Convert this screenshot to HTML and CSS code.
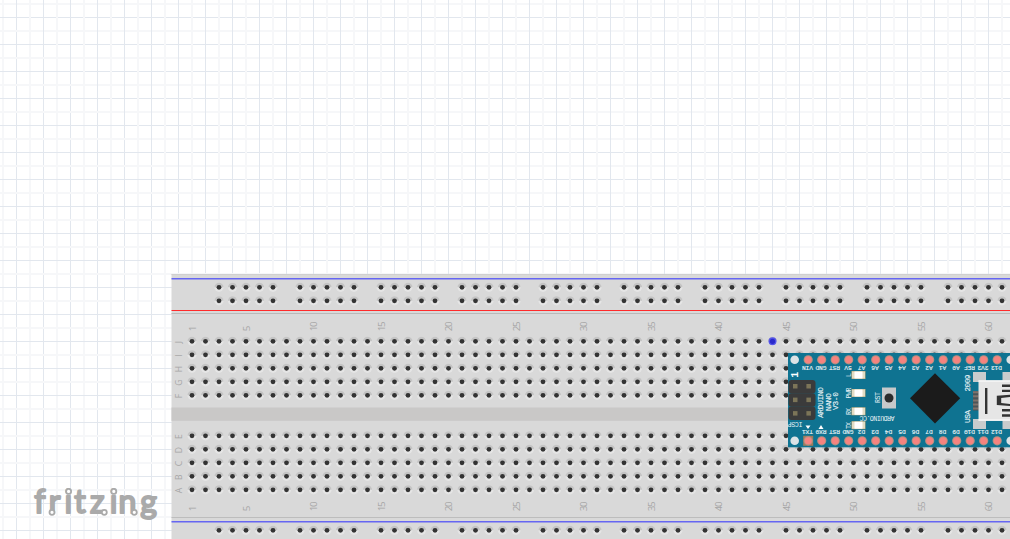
FILE: index.html
```html
<!DOCTYPE html>
<html lang="en">
<head>
<meta charset="utf-8">
<title>Fritzing</title>
<link rel="stylesheet" href="styles.css">
</head>
<body>
<svg class="canvas" width="1010" height="539" viewBox="0 0 1010 539">
  <defs>
    <g id="hole">
      <circle r="4.6" fill="#e5e5e5"/>
      <path d="M-4.6 0a4.6 4.6 0 0 1 9.2 0z" fill="#c4c4c4"/>
      <circle r="2.4" fill="#333"/>
    </g>
    <g id="pin">
      <circle r="4.6" fill="#b49082"/>
      <circle r="3.5" fill="#f5837f"/>
    </g>
    <g id="led">
      <rect x="-7" y="-4" width="14" height="8" fill="#b9a777"/>
      <rect x="-6.5" y="-3.5" width="13" height="7" fill="#e2dcc4"/>
      <rect x="-4" y="-3.5" width="8" height="7" fill="#fff"/>
    </g>
  </defs>
  <g id="grid"></g>
  <g id="board">
    <rect x="171.5" y="274" width="839" height="265" fill="#d9d9d9"/>
    <rect x="171.5" y="274" width="839" height="1" fill="#d0d0d0"/>
    <rect x="171.5" y="278" width="839" height="1.5" fill="#6666f2"/>
    <rect x="171.5" y="310" width="839" height="1" fill="#ff2b2b"/>
    <rect x="171.5" y="313" width="839" height="1" fill="#b9b9b9"/>
    <rect x="171.5" y="407.5" width="839" height="13.3" fill="#c9c8c7"/>
    <rect x="171.5" y="517" width="839" height="1" fill="#bdbdbd"/>
    <rect x="171.5" y="521" width="839" height="1.5" fill="#6666f2"/>
  </g>
  <g id="holes"></g>
  <g id="labels" class="board-label"></g>
  <circle cx="772.5" cy="341.3" r="4" fill="#5555e8"/>
  <circle cx="772.5" cy="341.3" r="2.6" fill="#2a2acb"/>

  <g id="nano">
    <rect x="788" y="353" width="223" height="94.3" fill="#0f7391"/>
    <g id="pins"></g>
    <g fill="#3b3b3b">
      <rect x="788.5" y="380" width="27" height="13.4" rx="3"/>
      <rect x="788.5" y="393.2" width="27" height="13.6" rx="3"/>
      <rect x="788.5" y="406.6" width="27" height="13.4" rx="3"/>
    </g>
    <g fill="#7c7558">
      <rect x="793" y="384" width="4.5" height="4.5"/><rect x="806.4" y="384" width="4.5" height="4.5"/>
      <rect x="793" y="397.6" width="4.5" height="4.5"/><rect x="806.4" y="397.6" width="4.5" height="4.5"/>
      <rect x="793" y="411.1" width="4.5" height="4.5"/><rect x="806.4" y="411.1" width="4.5" height="4.5"/>
    </g>
    <path d="M805.5 425.5h5l-2.5 3.5zM818.5 429h5l-2.5-4z" fill="#fff"/>
    <g class="silk">
      <text class="one" transform="translate(798.3 377.8) rotate(-90)">1</text>
      <text class="name" transform="translate(823 418) rotate(-90)" textLength="31">ARDUINO</text>
      <text class="name" transform="translate(830.5 411) rotate(-90)" textLength="18">NANO</text>
      <text class="name" transform="translate(837.8 410) rotate(-90)" textLength="18">V3-0</text>
      <text class="small" transform="translate(802.5 421.5) rotate(180)" textLength="15">ICSP</text>
      <text class="small" transform="translate(894.5 416.2) rotate(180)" textLength="35">ARDUINO.CC</text>
      <text class="small" transform="translate(851.3 377) rotate(-90)">L</text>
      <text class="small" transform="translate(851.3 398.5) rotate(-90)" textLength="11">PWR</text>
      <text class="small" transform="translate(851.3 415) rotate(-90)" textLength="7">RX</text>
      <text class="small" transform="translate(851.3 429) rotate(-90)" textLength="7">TX</text>
      <text class="small" transform="translate(879.5 403) rotate(-90)" textLength="11">RST</text>
      <text class="name" transform="translate(970 391.5) rotate(-90)" textLength="17">2009</text>
      <text class="name" transform="translate(970 423) rotate(-90)" textLength="13">USA</text>
    </g>
    <use href="#led" x="858.5" y="375"/>
    <use href="#led" x="858.5" y="393"/>
    <use href="#led" x="858.5" y="411.3"/>
    <use href="#led" x="858.5" y="425.2"/>
    <rect x="882" y="387.5" width="14" height="21" fill="#c7c9ca"/>
    <circle cx="889" cy="398" r="4.5" fill="#2c2c2c"/>
    <path d="M935 373.2l25.2 25.1-25.2 25.1-25-25.1z" fill="#1b1b1b"/>
    <g fill="#c9cccd">
      <rect x="973" y="372" width="13" height="10"/><rect x="973" y="419" width="13" height="10"/>
      <rect x="1002.5" y="372" width="8" height="10"/><rect x="1002.5" y="419" width="8" height="10"/>
    </g>
    <rect x="973" y="391" width="6.5" height="19.5" fill="#4b5558"/>
    <path d="M973 392.2h5.5M973 396.3h5.5M973 400.4h5.5M973 404.5h5.5M973 408.6h5.5" stroke="#80736c" stroke-width="2"/>
    <rect x="978.5" y="380.3" width="32" height="40.5" fill="#e6e6e6"/>
    <rect x="978.5" y="380.3" width="32" height="1.5" fill="#f7f7f7"/>
    <rect x="978.5" y="419.3" width="32" height="1.5" fill="#f7f7f7"/>
    <rect x="985" y="388" width="2.4" height="26" fill="#333"/>
    <path d="M1002 385.8h8M1002 390.9h8M1002 410.3h8M1002 415.5h8" stroke="#333" stroke-width="2.4"/>
    <path d="M1010 394.7l-13.2 1v9.4l13.2 1v-2.2l-8.8-1v-5l8.8-1z" fill="#333"/>
  </g>

  <g class="wordmark">
    <text y="513.2" x="34.3 48.7 64.6 74.3 89.9 109.7 118.4 140.3">fritzing</text>
    <g class="rings">
      <circle cx="52" cy="512.3" r="2.5"/>
      <circle cx="68.6" cy="491.4" r="2.5"/>
      <circle cx="104.3" cy="512.3" r="2.5"/>
      <circle cx="113.8" cy="491.4" r="2.5"/>
      <circle cx="134.3" cy="512.3" r="2.5"/>
    </g>
  </g>
</svg>
<script src="script.js"></script>
</body>
</html>
```
FILE: styles.css
```css
body {
  margin: 0;
  background: #fff;
  overflow: hidden;
}
.canvas {
  display: block;
}
.board-label {
  font: 9.8px "Open Sans", sans-serif;
  fill: #a6a6a6;
}
.silk, .pin-label {
  font-family: "Liberation Mono", monospace;
  fill: #e6f2f5;
}
.pin-label {
  font-size: 6.2px;
  stroke: #e6f2f5;
  stroke-width: 0.15;
}
.silk .one {
  font-size: 10px;
  font-weight: bold;
  fill: #fff;
}
.silk .name {
  font-size: 7.8px;
  stroke: #e6f2f5;
  stroke-width: 0.15;
}
.silk .small {
  font-size: 6.6px;
}
.wordmark text {
  font: 32px Lato, sans-serif;
  fill: #aaa;
  stroke: #aaa;
  stroke-width: 2;
  stroke-linejoin: round;
}
.rings {
  fill: #fff;
  stroke: #aaa;
  stroke-width: 1.8;
}
```
FILE: script.js
```js
const PITCH = 13.5;
const layer = id => document.getElementById(id);

function add(parent, tag, attrs, text) {
  const el = document.createElementNS("http://www.w3.org/2000/svg", tag);
  for (const key in attrs) el.setAttribute(key, attrs[key]);
  if (text) el.textContent = text;
  parent.appendChild(el);
}

// Grid lines alternate between crisp and soft
for (let i = 0; i < 75; i++) {
  const soft = i % 2 === 0;
  const size = soft ? 2 : 1;
  const fill = soft ? "#f6f7f9" : "#e2e7ee";
  add(layer("grid"), "rect", { x: Math.floor(2 + i * PITCH) + (soft ? 0 : 1), y: 0, width: size, height: 539, fill });
  if (i < 40) add(layer("grid"), "rect", { x: 0, y: Math.floor(3 + i * PITCH) + (soft ? 0 : 1), width: 1010, height: size, fill });
}

const hole = (x, y) => add(layer("holes"), "use", { href: "#hole", x, y });
const rows = { J: 341.3, I: 354.8, H: 368.3, G: 381.8, F: 395.3, E: 435.8, D: 449.3, C: 462.8, B: 476.3, A: 489.8 };

for (const [name, y] of Object.entries(rows)) {
  for (let c = 0; c < 61; c++) hole(192 + c * PITCH, y);
  add(layer("labels"), "text", { transform: `translate(182.2 ${y + 0.8}) rotate(-90)`, "text-anchor": "middle", "font-size": 8.6 }, name);
}
for (const y of [287.3, 300.8, 530.3]) {
  for (let x = 219; x < 1010; x += 6 * PITCH) {
    for (let k = 0; k < 5; k++) if (x + k * PITCH < 1012) hole(x + k * PITCH, y);
  }
}
for (const n of [1, 5, 10, 15, 20, 25, 30, 35, 40, 45, 50, 55, 60]) {
  for (const y of [331.3, 511.3]) {
    add(layer("labels"), "text", { transform: `translate(${195.8 + (n - 1) * PITCH} ${y}) rotate(-90)`, textLength: n < 10 ? 5 : 10 }, String(n));
  }
}

const sides = [
  [359.8, 366.2, ["VIN", "GND", "RST", "5V", "A7", "A6", "A5", "A4", "A3", "A2", "A1", "A0", "REF", "3V3", "D13"]],
  [440.8, 430.4, ["TX1", "RX0", "RST", "GND", "D2", "D3", "D4", "D5", "D6", "D7", "D8", "D9", "D10", "D11", "D12"]]
];
for (const [y, ty, names] of sides) {
  for (const x of [794.7, 1010.7]) add(layer("pins"), "circle", { cx: x, cy: y, r: 4.3, fill: "#dce3e6" });
  names.forEach((name, i) => {
    const x = 808.2 + i * PITCH;
    if (name === "TX1") add(layer("pins"), "rect", { x: x - 5, y: y - 5, width: 10, height: 10, fill: "#a17c5b" });
    add(layer("pins"), "use", { href: "#pin", x, y });
    add(layer("pins"), "text", { class: "pin-label", transform: `translate(${x - 0.7} ${ty}) rotate(180)`, "text-anchor": "middle" }, name);
  });
}
```
